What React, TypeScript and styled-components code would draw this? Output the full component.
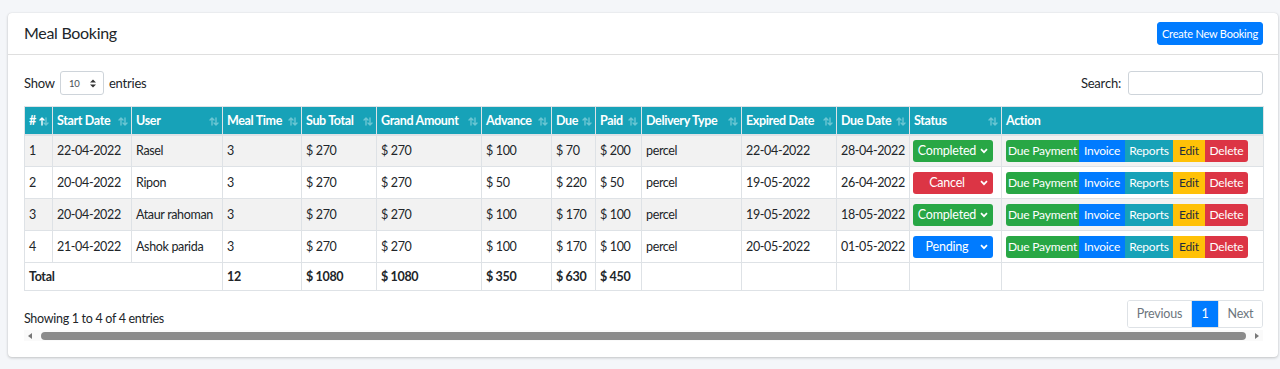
import React from "react";
import styled, { createGlobalStyle } from "styled-components";

const Global = createGlobalStyle`
  html, body { margin: 0; padding: 0; }
  body {
    background: #f4f6f9;
    font-family: Lato, "Noto Sans", "Liberation Sans", sans-serif;
    color: #212529;
    width: 1280px;
    height: 369px;
    overflow: hidden;
  }
  * { box-sizing: border-box; }
`;

const Page = styled.div`
  padding: 13px 2px 12px 8px;
`;

const Card = styled.div`
  background: #fff;
  border-radius: 4px;
  box-shadow: 0 0 1px rgba(0,0,0,.125), 0 1px 3px rgba(0,0,0,.2);
`;

const CardHeader = styled.div`
  height: 42px;
  display: flex;
  align-items: center;
  justify-content: space-between;
  padding: 0 15px 0 16px;
  border-bottom: 1px solid rgba(0,0,0,.125);
`;

const Title = styled.h3`
  margin: 0 0 3px 0;
  font-size: 16px;
  letter-spacing: -0.3px;
  font-weight: 400;
  color: #212529;
`;

const PrimaryButton = styled.button`
  background: #007bff;
  color: #fff;
  border: 1px solid #007bff;
  border-radius: 3px;
  height: 23px;
  width: 106px;
  padding: 0;
  font-family: inherit;
  font-size: 11px;
  letter-spacing: -0.2px;
  white-space: nowrap;
`;

const CardBody = styled.div`
  padding: 16px 15px 16px 16px;
`;

const TopBar = styled.div`
  display: flex;
  justify-content: space-between;
  align-items: center;
  height: 24px;
  margin-bottom: 11px;
  font-size: 13px;
  letter-spacing: -0.2px;
`;

const Label = styled.label`
  display: flex;
  align-items: center;
  gap: 5px;
  color: #212529;
`;

const FakeSelect = styled.div`
  width: 44px;
  height: 24px;
  border: 1px solid #ced4da;
  border-radius: 3px;
  display: flex;
  align-items: center;
  justify-content: space-between;
  padding: 0 7px 0 8px;
  font-size: 9.5px;
  color: #495057;
`;

const SearchInput = styled.input`
  width: 135px;
  height: 24px;
  border: 1px solid #ced4da;
  border-radius: 3px;
  margin-left: 2px;
`;

const Table = styled.table`
  width: 1239px;
  border-collapse: collapse;
  table-layout: fixed;
  font-size: 12.5px;
  letter-spacing: -0.35px;
  border: 1px solid #dee2e6;
`;

const Th = styled.th<{ $w: number }>`
  width: ${(p) => p.$w}px;
  background: #17a2b8;
  color: #fff;
  font-weight: 700;
  text-align: left;
  height: 28px;
  padding: 0 4px 0 4px;
  border: 1px solid #dee2e6;
  border-bottom-width: 2px;
  position: relative;
  white-space: nowrap;
  overflow: hidden;
`;

const SortIcon = styled.span`
  position: absolute;
  right: 3px;
  top: 10px;
  display: flex;
`;

const Tr = styled.tr<{ $striped?: boolean }>`
  background: ${(p) => (p.$striped ? "#f2f2f2" : "#fff")};
`;

const Td = styled.td<{ $bold?: boolean }>`
  height: 32px;
  padding: 0 4px;
  border: 1px solid #dee2e6;
  vertical-align: middle;
  white-space: nowrap;
  overflow: hidden;
  font-weight: ${(p) => (p.$bold ? 700 : 400)};
  color: #212529;
`;

const TotalTd = styled(Td)`
  height: 28px;
`;

const StatusSelect = styled.div<{ $bg: string }>`
  width: 80px;
  height: 22px;
  border-radius: 3px;
  background: ${(p) => p.$bg};
  color: #fff;
  display: flex;
  align-items: center;
  justify-content: center;
  position: relative;
  font-size: 12.5px;
  letter-spacing: -0.2px;
  padding-right: 12px;
  margin-left: -1px;
`;

const Chevron = styled.span`
  position: absolute;
  right: 5px;
  top: 8px;
  display: flex;
`;

const BtnGroup = styled.div`
  display: flex;
  height: 22px;
  border-radius: 3px;
  overflow: hidden;
  width: max-content;
`;

const ActBtn = styled.span<{ $bg: string; $fg: string; $w: number }>`
  width: ${(p) => p.$w}px;
  background: ${(p) => p.$bg};
  color: ${(p) => p.$fg};
  display: flex;
  align-items: center;
  justify-content: center;
  font-size: 12px;
  letter-spacing: -0.2px;
`;

const Footer = styled.div`
  display: flex;
  justify-content: space-between;
  align-items: center;
  margin-top: 9px;
  height: 27px;
`;

const Info = styled.div`
  font-size: 12.5px;
  letter-spacing: -0.3px;
  color: #212529;
  padding-top: 9px;
`;

const Pager = styled.div`
  display: flex;
  height: 28px;
  border: 1px solid #dee2e6;
  border-radius: 3px;
  overflow: hidden;
`;

const PageItem = styled.span<{ $w: number; $active?: boolean }>`
  width: ${(p) => p.$w}px;
  display: flex;
  align-items: center;
  justify-content: center;
  font-size: 12.5px;
  letter-spacing: -0.2px;
  color: ${(p) => (p.$active ? "#fff" : "#6c757d")};
  background: ${(p) => (p.$active ? "#007bff" : "#fff")};
  & + & { border-left: 1px solid #dee2e6; }
`;

const ScrollBar = styled.div`
  margin-top: 3px;
  height: 11px;
  display: flex;
  align-items: center;
  gap: 9px;
  padding: 0 4px;
  background: #fafafa;
`;

const Thumb = styled.div`
  flex: 1;
  height: 8px;
  border-radius: 4px;
  background: #8a8a8a;
`;

const SortArrows = ({ active }: { active?: boolean }) => (
  <svg width="10" height="9" viewBox="0 0 10 9">
    <g fill="none" strokeWidth="1.4" strokeLinecap="round" strokeLinejoin="round">
      <path d="M3 8V1M1 3l2-2 2 2" stroke={active ? "#ffffff" : "#6cc6d3"} />
      <path d="M7 1V8M5 6l2 2 2-2" stroke="#6cc6d3" />
    </g>
  </svg>
);

const cols: { name: string; w: number; active?: boolean }[] = [
  { name: "#", w: 28, active: true },
  { name: "Start Date", w: 79 },
  { name: "User", w: 91 },
  { name: "Meal Time", w: 79 },
  { name: "Sub Total", w: 75 },
  { name: "Grand Amount", w: 105 },
  { name: "Advance", w: 70 },
  { name: "Due", w: 44 },
  { name: "Paid", w: 46 },
  { name: "Delivery Type", w: 100 },
  { name: "Expired Date", w: 95 },
  { name: "Due Date", w: 73 },
  { name: "Status", w: 92 },
  { name: "Action", w: 262 },
];

const rows = [
  ["1", "22-04-2022", "Rasel", "3", "$ 270", "$ 270", "$ 100", "$ 70", "$ 200", "percel", "22-04-2022", "28-04-2022", "Completed"],
  ["2", "20-04-2022", "Ripon", "3", "$ 270", "$ 270", "$ 50", "$ 220", "$ 50", "percel", "19-05-2022", "26-04-2022", "Cancel"],
  ["3", "20-04-2022", "Ataur rahoman", "3", "$ 270", "$ 270", "$ 100", "$ 170", "$ 100", "percel", "19-05-2022", "18-05-2022", "Completed"],
  ["4", "21-04-2022", "Ashok parida", "3", "$ 270", "$ 270", "$ 100", "$ 170", "$ 100", "percel", "20-05-2022", "01-05-2022", "Pending"],
];

const statusColor: Record<string, string> = {
  Completed: "#28a745",
  Cancel: "#dc3545",
  Pending: "#007bff",
};

const actions = [
  { label: "Due Payment", bg: "#28a745", fg: "#fff", w: 73 },
  { label: "Invoice", bg: "#007bff", fg: "#fff", w: 46 },
  { label: "Reports", bg: "#17a2b8", fg: "#fff", w: 48 },
  { label: "Edit", bg: "#ffc107", fg: "#1f2d3d", w: 32 },
  { label: "Delete", bg: "#dc3545", fg: "#fff", w: 43 },
];

const ChevronIcon = () => (
  <svg width="8" height="6" viewBox="0 0 8 6">
    <path d="M1 1.2l3 3 3-3" fill="none" stroke="#fff" strokeWidth="1.7" />
  </svg>
);

export default function App() {
  return (
    <>
      <Global />
      <Page>
        <Card>
          <CardHeader>
            <Title>Meal Booking</Title>
            <PrimaryButton>Create New Booking</PrimaryButton>
          </CardHeader>
          <CardBody>
            <TopBar>
              <Label>
                Show
                <FakeSelect>
                  <span>10</span>
                  <svg width="6" height="9" viewBox="0 0 6 9">
                    <path d="M0 3.5L3 0.5 6 3.5z M0 5.5L3 8.5 6 5.5z" fill="#333" />
                  </svg>
                </FakeSelect>
                entries
              </Label>
              <Label>
                Search:
                <SearchInput />
              </Label>
            </TopBar>
            <Table>
              <thead>
                <tr>
                  {cols.map((c) => (
                    <Th key={c.name} $w={c.w}>
                      {c.name}
                      {c.name !== "Action" && (
                        <SortIcon>
                          <SortArrows active={c.active} />
                        </SortIcon>
                      )}
                    </Th>
                  ))}
                </tr>
              </thead>
              <tbody>
                {rows.map((r, i) => (
                  <Tr key={i} $striped={i % 2 === 0}>
                    {r.slice(0, 12).map((v, j) => (
                      <Td key={j}>{v}</Td>
                    ))}
                    <Td>
                      <StatusSelect $bg={statusColor[r[12]]}>
                        {r[12]}
                        <Chevron>
                          <ChevronIcon />
                        </Chevron>
                      </StatusSelect>
                    </Td>
                    <Td>
                      <BtnGroup>
                        {actions.map((a) => (
                          <ActBtn key={a.label} $bg={a.bg} $fg={a.fg} $w={a.w}>
                            {a.label}
                          </ActBtn>
                        ))}
                      </BtnGroup>
                    </Td>
                  </Tr>
                ))}
                <Tr>
                  <TotalTd $bold colSpan={3}>Total</TotalTd>
                  <TotalTd $bold>12</TotalTd>
                  <TotalTd $bold>$ 1080</TotalTd>
                  <TotalTd $bold>$ 1080</TotalTd>
                  <TotalTd $bold>$ 350</TotalTd>
                  <TotalTd $bold>$ 630</TotalTd>
                  <TotalTd $bold>$ 450</TotalTd>
                  <TotalTd />
                  <TotalTd />
                  <TotalTd />
                  <TotalTd />
                  <TotalTd />
                </Tr>
              </tbody>
            </Table>
            <Footer>
              <Info>Showing 1 to 4 of 4 entries</Info>
              <Pager>
                <PageItem $w={63}>Previous</PageItem>
                <PageItem $w={27} $active>1</PageItem>
                <PageItem $w={44}>Next</PageItem>
              </Pager>
            </Footer>
            <ScrollBar>
              <svg width="4" height="6" viewBox="0 0 4 6"><path d="M4 0v6L0 3z" fill="#777" /></svg>
              <Thumb />
              <svg width="4" height="6" viewBox="0 0 4 6"><path d="M0 0v6l4-3z" fill="#777" /></svg>
            </ScrollBar>
          </CardBody>
        </Card>
      </Page>
    </>
  );
}
